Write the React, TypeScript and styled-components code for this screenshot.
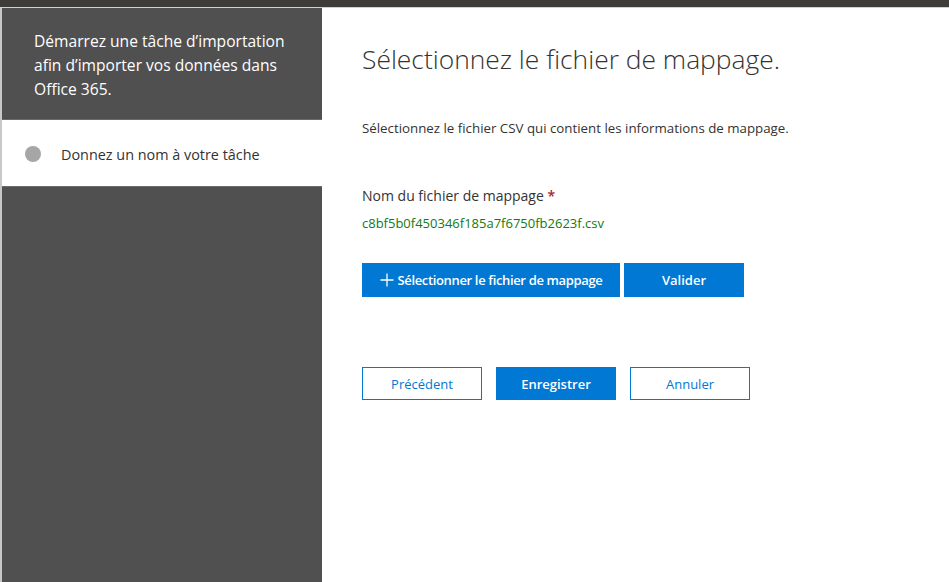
import React from "react";
import styled, { createGlobalStyle } from "styled-components";

const GlobalStyle = createGlobalStyle`
  html, body {
    margin: 0;
    padding: 0;
    background: #ffffff;
  }
  body {
    font-family: "Open Sans", "Noto Sans", "Liberation Sans", sans-serif;
    color: #333333;
  }
  * {
    box-sizing: border-box;
  }
`;

const Page = styled.div`
  width: 949px;
  height: 582px;
  display: flex;
  flex-direction: column;
  overflow: hidden;
`;

const TopBar = styled.div`
  height: 8px;
  flex-shrink: 0;
  background: #3d3c3b;
  border-bottom: 1px solid #d0d0d0;
`;

const Body = styled.div`
  flex: 1;
  display: flex;
  min-height: 0;
`;

const Sidebar = styled.aside`
  width: 322px;
  flex-shrink: 0;
  background: #505050;
  border-left: 2px solid #c8c8c8;
  display: flex;
  flex-direction: column;
`;

const Intro = styled.div`
  height: 112px;
  padding: 21px 20px 0 32px;
  color: #ffffff;
  font-size: 15.6px;
  line-height: 24px;
  border-bottom: 1px solid #6a6a6a;
`;

const Step = styled.div`
  height: 67px;
  background: #ffffff;
  display: flex;
  align-items: center;
  gap: 20px;
  padding-left: 23px;
  padding-top: 2px;
  font-size: 14.4px;
  color: #333333;
  border-bottom: 1px solid #6a6a6a;
`;

const StepDot = styled.span`
  width: 16px;
  height: 16px;
  border-radius: 50%;
  background: #a6a6a6;
`;

const Main = styled.main`
  flex: 1;
  padding: 31px 0 0 40px;
  display: flex;
  flex-direction: column;
`;

const Title = styled.h1`
  margin: 0;
  font-size: 26.4px;
  font-weight: 300;
  line-height: 40px;
  color: #333333;
`;

const Lead = styled.p`
  margin: 40px 0 0;
  font-size: 13.3px;
  line-height: 18px;
  color: #333333;
`;

const FieldLabel = styled.div`
  margin-top: 49px;
  font-size: 14px;
  font-weight: 500;
  line-height: 20px;
  color: #333333;
`;

const Required = styled.span`
  color: #a4262c;
  font-weight: 600;
`;

const FileName = styled.div`
  margin-top: 8px;
  font-size: 13px;
  line-height: 18px;
  color: #107c10;
`;

const ButtonRow = styled.div<{ $gap: number; $top: number }>`
  display: flex;
  gap: ${({ $gap }) => $gap}px;
  margin-top: ${({ $top }) => $top}px;
`;

const Button = styled.button<{ $variant?: "primary" | "outline"; $width?: number; $height?: number }>`
  height: ${({ $height }) => $height ?? 34}px;
  width: ${({ $width }) => ($width ? `${$width}px` : "auto")};
  padding: 0;
  display: flex;
  align-items: center;
  justify-content: center;
  gap: 4px;
  white-space: nowrap;
  font-family: inherit;
  font-size: 13px;
  font-weight: ${({ $variant }) => ($variant === "outline" ? 400 : 600)};
  background: ${({ $variant }) => ($variant === "outline" ? "#ffffff" : "#0078d4")};
  color: ${({ $variant }) => ($variant === "outline" ? "#0078d4" : "#ffffff")};
  border: 1px solid #0078d4;
  border-radius: 0;
  cursor: pointer;
`;

const ButtonText = styled.span<{ $tight?: boolean }>`
  letter-spacing: ${({ $tight }) => ($tight ? "-0.35px" : "0")};
`;

const PlusIcon = () => (
  <svg width="14" height="14" viewBox="0 0 14 14" aria-hidden="true">
    <path d="M7 0.5v13M0.5 7h13" stroke="#ffffff" strokeWidth="1.3" fill="none" />
  </svg>
);

export default function App() {
  return (
    <>
      <GlobalStyle />
      <Page>
        <TopBar />
        <Body>
          <Sidebar>
            <Intro>
              Démarrez une tâche d’importation afin d’importer vos données dans Office 365.
            </Intro>
            <Step>
              <StepDot />
              Donnez un nom à votre tâche
            </Step>
          </Sidebar>
          <Main>
            <Title>Sélectionnez le fichier de mappage.</Title>
            <Lead>Sélectionnez le fichier CSV qui contient les informations de mappage.</Lead>
            <FieldLabel>
              Nom du fichier de mappage <Required>*</Required>
            </FieldLabel>
            <FileName>c8bf5b0f450346f185a7f6750fb2623f.csv</FileName>
            <ButtonRow $gap={4} $top={31}>
              <Button $width={258}>
                <PlusIcon />
                <ButtonText $tight>Sélectionner le fichier de mappage</ButtonText>
              </Button>
              <Button $width={120}>
                <ButtonText>Valider</ButtonText>
              </Button>
            </ButtonRow>
            <ButtonRow $gap={14} $top={70}>
              <Button $variant="outline" $width={120} $height={33}>
                <ButtonText>Précédent</ButtonText>
              </Button>
              <Button $width={120} $height={33}>
                <ButtonText>Enregistrer</ButtonText>
              </Button>
              <Button $variant="outline" $width={120} $height={33}>
                <ButtonText>Annuler</ButtonText>
              </Button>
            </ButtonRow>
          </Main>
        </Body>
      </Page>
    </>
  );
}
